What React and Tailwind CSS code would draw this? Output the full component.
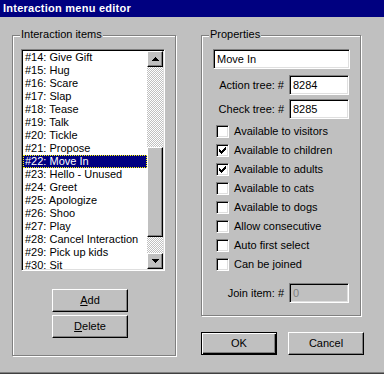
import React from "react";

const sunken =
  "border border-t-[#808080] border-l-[#808080] border-r-white border-b-white shadow-[inset_1px_1px_0_#000,inset_-1px_-1px_0_#dfdfdf]";
const raised =
  "border border-t-white border-l-white border-r-black border-b-black shadow-[inset_-1px_-1px_0_#808080]";
const checker =
  "bg-[repeating-conic-gradient(#c0c0c0_0%_25%,#ffffff_0%_50%)] bg-[length:2px_2px]";

const items = [
  "#14: Give Gift",
  "#15: Hug",
  "#16: Scare",
  "#17: Slap",
  "#18: Tease",
  "#19: Talk",
  "#20: Tickle",
  "#21: Propose",
  "#22: Move In",
  "#23: Hello - Unused",
  "#24: Greet",
  "#25: Apologize",
  "#26: Shoo",
  "#27: Play",
  "#28: Cancel Interaction",
  "#29: Pick up kids",
  "#30: Sit",
];

const checks = [
  ["Available to visitors", false],
  ["Available to children", true],
  ["Available to adults", true],
  ["Available to cats", false],
  ["Available to dogs", false],
  ["Allow consecutive", false],
  ["Auto first select", false],
  ["Can be joined", false],
];

function Group({ label, className, children }) {
  return (
    <div
      className={
        "relative border border-[#808080] shadow-[inset_1px_1px_0_#fff,1px_1px_0_#fff] " +
        className
      }
    >
      <span className="absolute left-[7px] top-[-8px] bg-[#c0c0c0] px-[1px] leading-[13px]">
        {label}
      </span>
      {children}
    </div>
  );
}

function Arrow({ up }) {
  return (
    <svg width="7" height="4" viewBox="0 0 7 4" shapeRendering="crispEdges">
      {up ? (
        <path d="M3 0h1v1h1v1h1v1h1v1H0V3h1V2h1V1h1z" fill="#000" />
      ) : (
        <path d="M0 0h7v1H6v1H5v1H4v1H3V3H2V2H1V1H0z" fill="#000" />
      )}
    </svg>
  );
}

function Check() {
  return (
    <svg width="7" height="7" viewBox="0 0 7 7" shapeRendering="crispEdges">
      <path
        d="M6 0h1v3H6v1H5v1H4v1H3v1H2V6H1V5H0V2h1v1h1v1h1V3h1V2h1V1h1z"
        fill="#000"
      />
    </svg>
  );
}

function Btn({ children, className = "" }) {
  return (
    <div
      className={
        "flex items-center justify-center h-[23px] " + raised + " " + className
      }
    >
      {children}
    </div>
  );
}

export default function App() {
  return (
    <div className="w-[384px] h-[374px] bg-[#c0c0c0] flex flex-col font-['Liberation_Sans',Arial,sans-serif] text-[11px] text-black shadow-[inset_0_-1px_0_#404040,inset_0_-2px_0_#808080]">
      <div className="h-[17px] bg-[#000080] text-white font-bold text-[11px] tracking-[0.25px] pl-[3px] flex items-center">
        Interaction menu editor
      </div>
      <div className="flex pl-[12px] pt-[18px] gap-[25px]">
        {/* Left group */}
        <Group
          label="Interaction items"
          className="w-[164px] h-[321px] pl-[8px] pt-[13px] flex flex-col"
        >
          <div className={"w-[144px] h-[222px] bg-white flex p-[1px] " + sunken}>
            <div className="flex-1 overflow-hidden">
              {items.map((t, i) => (
                <div
                  key={t}
                  className={
                    "h-[13px] leading-[13px] pl-[2px] whitespace-nowrap " +
                    (i === 8
                      ? "bg-[#000080] text-white outline-1 outline-dotted outline-[#ffff00] -outline-offset-1"
                      : "")
                  }
                >
                  {t}
                </div>
              ))}
            </div>
            <div className="w-[16px] flex flex-col">
              <div
                className={
                  "h-[16px] flex items-center justify-center bg-[#c0c0c0] " +
                  raised
                }
              >
                <Arrow up />
              </div>
              <div className={"h-[80px] " + checker} />
              <div className={"h-[90px] bg-[#c0c0c0] " + raised} />
              <div className={"flex-1 " + checker} />
              <div
                className={
                  "h-[16px] flex items-center justify-center bg-[#c0c0c0] " +
                  raised
                }
              >
                <Arrow />
              </div>
            </div>
          </div>
          <div className="flex flex-col gap-[3px] ml-[31px] mt-[18px]">
            <Btn className="w-[76px]">
              <span>
                <u>A</u>dd
              </span>
            </Btn>
            <Btn className="w-[76px]">
              <span>
                <u>D</u>elete
              </span>
            </Btn>
          </div>
        </Group>

        {/* Right column */}
        <div className="flex flex-col">
          <Group
            label="Properties"
            className="w-[160px] h-[281px] pl-[11px] pt-[13px] flex flex-col"
          >
            <div
              className={
                "w-[137px] h-[20px] bg-white flex items-center pl-[3px] " +
                sunken
              }
            >
              Move In
            </div>
            <div className="flex items-center mt-[6px] h-[20px]">
              <span className="w-[76px] text-right pr-[5px]">Action tree: #</span>
              <div
                className={
                  "w-[60px] h-[20px] bg-white flex items-center pl-[3px] " +
                  sunken
                }
              >
                8284
              </div>
            </div>
            <div className="flex items-center mt-[4px] h-[20px]">
              <span className="w-[76px] text-right pr-[5px]">Check tree: #</span>
              <div
                className={
                  "w-[60px] h-[20px] bg-white flex items-center pl-[3px] " +
                  sunken
                }
              >
                8285
              </div>
            </div>
            <div className="flex flex-col gap-[6px] mt-[6px] pl-[3px]">
              {checks.map(([t, c]) => (
                <div key={t} className="flex items-center h-[13px]">
                  <div
                    className={
                      "w-[13px] h-[13px] bg-white flex items-center justify-center " +
                      sunken
                    }
                  >
                    {c && <Check />}
                  </div>
                  <span className="ml-[5px] leading-[13px]">{t}</span>
                </div>
              ))}
            </div>
            <div className="flex items-center mt-[12px] h-[20px]">
              <span className="w-[76px] text-right pr-[5px]">Join item: #</span>
              <div
                className={
                  "w-[60px] h-[20px] bg-[#c0c0c0] text-[#808080] flex items-center pl-[3px] " +
                  sunken
                }
              >
                0
              </div>
            </div>
          </Group>
          <div className="flex mt-[16px] gap-[11px]">
            <div className="w-[76px] h-[23px] flex items-center justify-center border border-black shadow-[inset_1px_1px_0_#fff,inset_-1px_-1px_0_#000,inset_-2px_-2px_0_#808080]">
              OK
            </div>
            <Btn className="w-[76px]">Cancel</Btn>
          </div>
        </div>
      </div>
    </div>
  );
}
